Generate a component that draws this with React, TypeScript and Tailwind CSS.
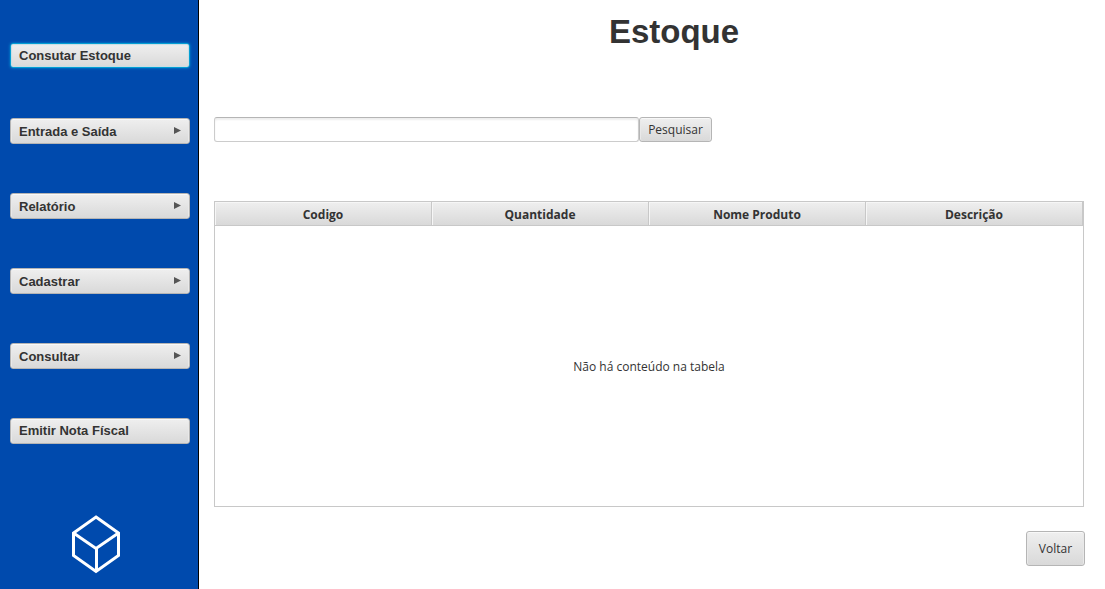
const face = "rounded-[3px] border border-[#b5b5b5] bg-linear-to-b from-[#efefef] to-[#d9d9d9] text-[#333333] shadow-[inset_0_1px_0_#f8f8f8,inset_1px_0_0_#e9e9e9,inset_-1px_0_0_#e9e9e9]";

const items = [
  { label: "Consutar Estoque", menu: false, active: true },
  { label: "Entrada e Saída", menu: true, active: false },
  { label: "Relatório", menu: true, active: false },
  { label: "Cadastrar", menu: true, active: false },
  { label: "Consultar", menu: true, active: false },
  { label: "Emitir Nota Físcal", menu: false, active: false },
];

const columns = ["Codigo", "Quantidade", "Nome Produto", "Descrição"];

function NavButton({ label, menu, active }: { label: string; menu: boolean; active: boolean }) {
  const state = active
    ? "mb-px h-[25px] rounded-[3px] border border-[#039ed3] bg-linear-to-b from-[#efefef] to-[#d9d9d9] text-[#333333] shadow-[0_0_3px_#0093d6,inset_0_0_1px_1px_#c8dde4]"
    : `h-[26px] ${face}`;
  return (
    <button
      type="button"
      aria-haspopup={menu ? "menu" : undefined}
      className={`flex w-full items-center justify-between px-2 text-left font-['Liberation_Sans',Arial,sans-serif] text-[13px] font-bold ${state}`}
    >
      <span className={menu ? "pt-0.5" : ""}>{label}</span>
      {menu && (
        <svg width="8" height="8" viewBox="0 0 8 8" aria-hidden="true">
          <path d="M1 0 8 3.500 1 7Z" fill="#555555" />
        </svg>
      )}
    </button>
  );
}

function CubeLogo() {
  return (
    <svg width="52" height="60" viewBox="0 0 52 60" fill="none" stroke="#ffffff" strokeWidth="3" aria-hidden="true">
      <path d="M26 3 48.500 19V41.500L26 57.500 3.500 41.500V19Z" />
      <path d="M3.500 19 26 34.500 48.500 19M26.500 34.500V57" />
    </svg>
  );
}

export default function App() {
  return (
    <div className="flex min-h-screen bg-white font-['Open_Sans','Segoe_UI',sans-serif] text-xs text-[#333333]">
      <aside className="flex w-[199px] shrink-0 flex-col border-r border-black bg-[#004aad] pt-[43px] pr-2 pl-[10px]">
        <nav className="flex flex-col gap-[49px]">
          {items.map((item) => (
            <NavButton key={item.label} {...item} />
          ))}
        </nav>
        <div className="mt-[70px] flex justify-center pr-2">
          <CubeLogo />
        </div>
      </aside>

      <main className="flex min-w-0 flex-1 flex-col pt-3 pr-[21px] pb-[23px] pl-[15px]">
        <h1 className="pl-[50px] text-center font-['Liberation_Sans',Arial,sans-serif] text-[33px] leading-[39px] font-bold">
          Estoque
        </h1>

        <form className="mt-[66px] flex" onSubmit={(e) => e.preventDefault()}>
          <input
            type="text"
            aria-label="Pesquisar produto"
            className="h-[25px] w-[425px] min-w-0 rounded-[3px] border border-[#cccccc] border-t-[#b5b5b5] bg-white px-2 shadow-[inset_0_2px_2px_#eeeeee] outline-none"
          />
          <button type="submit" className={`h-[25px] w-[73px] shrink-0 ${face}`}>
            Pesquisar
          </button>
        </form>

        <table className="mt-[59px] w-full table-fixed border-separate border-spacing-0 border border-[#c8c8c8]">
          <thead>
            <tr>
              {columns.map((name) => (
                <th
                  key={name}
                  scope="col"
                  className="h-6 border-r border-b border-[#c8c8c8] bg-linear-to-b from-[#efefef] to-[#d9d9d9] px-0 pt-0.5 pb-0 font-bold shadow-[inset_1px_1px_0_#f6f6f6]"
                >
                  {name}
                </th>
              ))}
            </tr>
          </thead>
          <tbody>
            <tr>
              <td colSpan={4} className="h-[280px] px-0 pt-0.5 pb-0 text-center align-middle">
                Não há conteúdo na tabela
              </td>
            </tr>
          </tbody>
        </table>

        <button type="button" className={`mt-6 -mr-px h-[35px] w-[59px] self-end ${face}`}>
          Voltar
        </button>
      </main>
    </div>
  );
}
